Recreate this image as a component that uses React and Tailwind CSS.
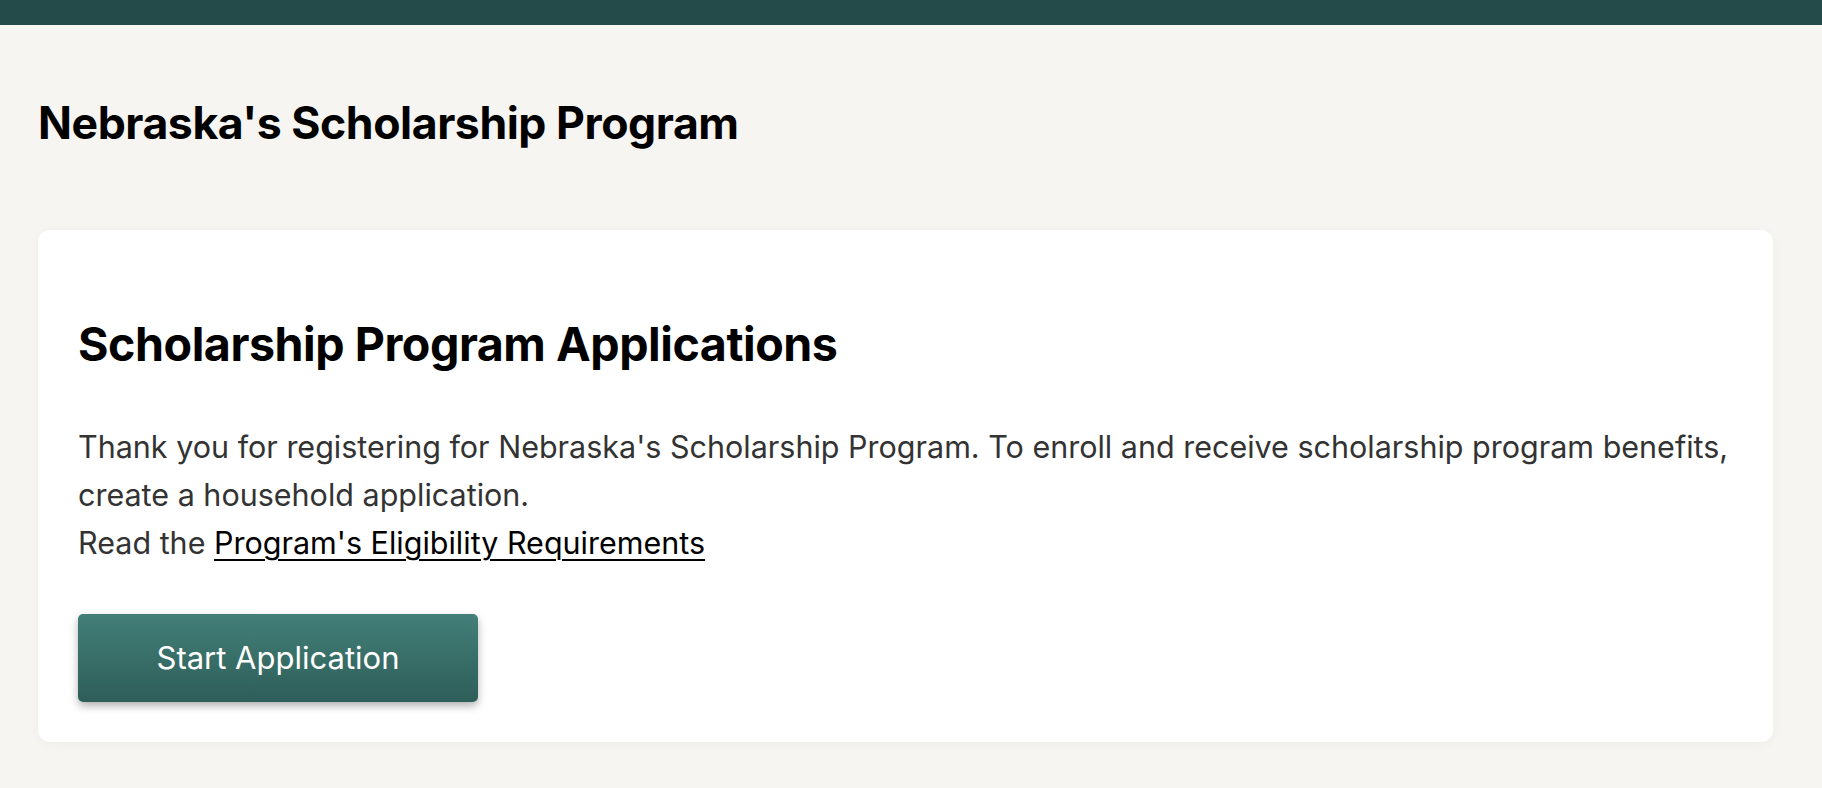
export default function App() {
  return (
    <div className="min-h-screen bg-[#f6f5f1]" style={{ fontFamily: "Inter, 'Noto Sans', sans-serif" }}>
      <div className="h-[25px] bg-[#244b4a]" />
      <main className="pl-[38px] pr-[49px] pt-[71px] pb-10">
        <h1 className="text-[44.6px] leading-[54px] font-bold text-black tracking-[-0.01em]">
          Nebraska's Scholarship Program
        </h1>
        <section className="mt-[80px] bg-white rounded-[12px] shadow-[0_2px_12px_rgba(0,0,0,0.04)] px-10 pt-[86px] pb-10">
          <h2 className="text-[46.6px] leading-[56px] font-bold text-black tracking-[-0.01em]">
            Scholarship Program Applications
          </h2>
          <p className="mt-[51px] text-[30.5px] leading-[48px] text-[#333333]">
            Thank you for registering for Nebraska's Scholarship Program. To enroll and receive scholarship program benefits,
            <br />
            create a household application.
            <br />
            Read the{" "}
            <a href="#" className="text-black underline underline-offset-[5px] decoration-[2px]">
              Program's Eligibility Requirements
            </a>
          </p>
          <button className="mt-[47px] w-[400px] h-[88px] rounded-[5px] bg-gradient-to-b from-[#427f78] to-[#2f5e59] text-white text-[31px] shadow-[0_4px_8px_rgba(0,0,0,0.3)]">
            Start Application
          </button>
        </section>
      </main>
    </div>
  );
}
